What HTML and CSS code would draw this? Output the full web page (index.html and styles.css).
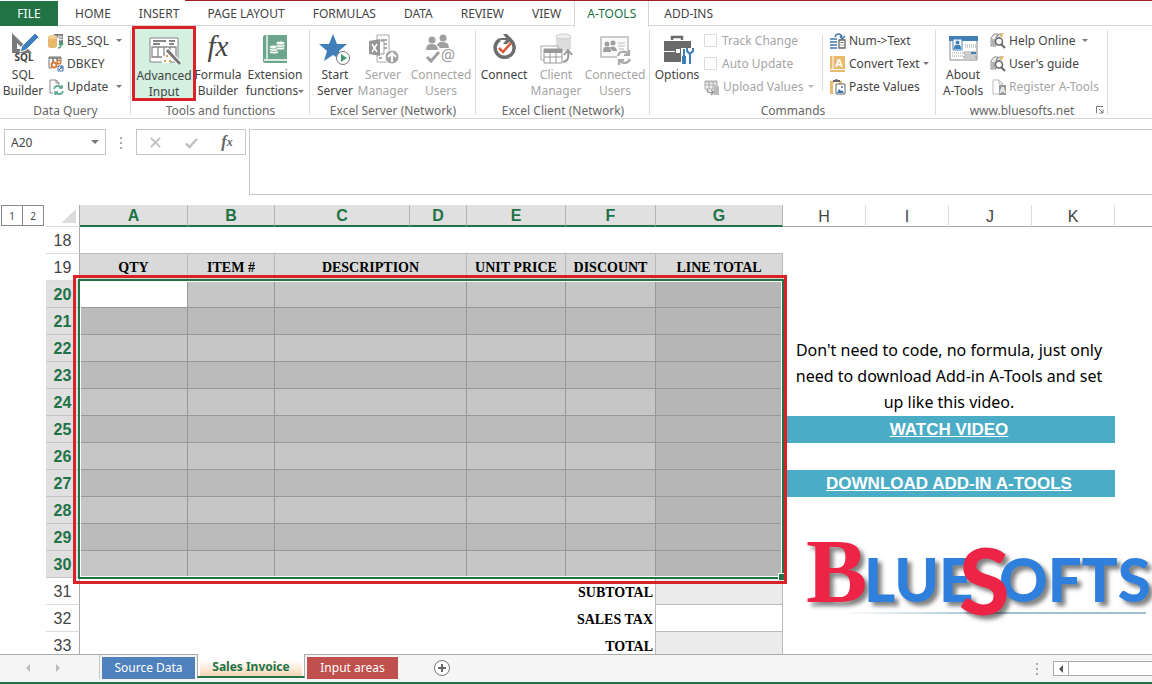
FILE: index.html
```
<!DOCTYPE html>
<html lang="en">
<head>
  <meta charset="UTF-8" />
  <meta name="viewport" content="width=device-width, initial-scale=1.0" />
  <title>Sales Invoice</title>
  <link rel="stylesheet" href="styles.css">
</head>
<body>
  <nav class="tabs">
    <button class="file">FILE</button>
    <button>HOME</button>
    <button>INSERT</button>
    <button>PAGE LAYOUT</button>
    <button>FORMULAS</button>
    <button>DATA</button>
    <button>REVIEW</button>
    <button>VIEW</button>
    <button class="active">A-TOOLS</button>
    <button>ADD-INS</button>
  </nav>

  <div class="ribbon">
    <!-- Data Query -->
    <section class="group g-query">
      <div class="tools">
        <button class="big w46">
          <svg viewBox="0 0 32 32"><path d="M5 1v20h20z" fill="#7a7a7a"/><path d="M10 11v6h6z" fill="#fff"/><path d="M13 20l2-6L28 1l4 4-13 13z" fill="#3f7fbf" stroke="#fff"/><rect x="5" y="21" width="24" height="10" fill="#fff"/><text x="17" y="29" class="icon-sql">SQL</text></svg>
          <span>SQL<br>Builder</span>
        </button>
        <div class="small-list">
          <button class="small"><svg viewBox="0 0 16 16"><path d="M6 1h9v10h-4V5H6z" fill="#777"/><path d="M8 4h7M8 6.500h7M11 2v6M13 2v6" stroke="#fff" stroke-width=".7"/><path d="M0 4v9c0 3 9 3 9 0V4z" fill="#e8b86d"/><ellipse cx="4.500" cy="4" rx="4.500" ry="2" fill="#f2cf91"/><path d="M10 15c3 0 3-2 3-5m-2 2l2-3 2 3" stroke="#4b9a78" stroke-width="1.500" fill="none"/></svg><span class="name">BS_SQL</span><i class="caret"></i></button>
          <button class="small"><svg viewBox="0 0 16 16"><path d="M4 12H1V1h12v4" fill="none" stroke="#777"/><path d="M1 2h12M5 2v4M9 2v3" stroke="#777" stroke-width="1.500"/><circle cx="6" cy="9" r="2.500" fill="none" stroke="#dd7a35" stroke-width="2"/><circle cx="11" cy="6" r="1.800" fill="none" stroke="#dd7a35" stroke-width="1.500"/><path d="M10 10h5v5h-5z" fill="#fff" stroke="#3e6ea5"/><path d="M11 14l3-3m-2 0h2v2" stroke="#3e6ea5" fill="none"/></svg><span class="name">DBKEY</span></button>
          <button class="small"><svg viewBox="0 0 16 16"><path d="M5 14H2V1h6l3 3v2M8 1v3h3" fill="none" stroke="#888"/><path d="M6 10c1-4 6-4 8-1m0-3v3h-3M15 12c-1 4-6 4-8 1m0 3v-3h3" fill="none" stroke="#5ea88b" stroke-width="1.600"/></svg><span class="name">Update</span><i class="caret"></i></button>
        </div>
      </div>
      <div class="group-name">Data Query</div>
    </section>

    <!-- Tools and functions -->
    <section class="group g-tools">
      <div class="tools">
        <button class="big w64 picked">
          <svg viewBox="0 0 32 32"><path d="M2 5h28v24H2z" fill="#fff" stroke="#858585"/><path d="M5 8h13M5 11h7M21 8h6M21 11h5" stroke="#858585" stroke-width="2"/><path d="M4 14h24v10H4zM10 14v10M16 14v10M22 14v10" fill="none" stroke="#858585" stroke-width="1.300"/><path d="M14 23h8v7h-8z" fill="#fff"/><path d="M18 16L32 31" stroke="#fff" stroke-width="5"/><path d="M19 17L32 31" stroke="#777" stroke-width="3"/><path d="M18 23l1 1 1-1-1-1zM21 28l1 1 1-1-1-1zM16 28l1 1 1-1-1-1z" fill="#fff" stroke="#dfa258"/></svg>
          <span>Advanced<br>Input</span>
        </button>
        <button class="big w44">
          <svg viewBox="0 0 32 32"><text x="16" y="24" class="icon-fx">fx</text></svg>
          <span>Formula<br>Builder</span>
        </button>
        <button class="big w70">
          <svg viewBox="0 0 32 32"><path d="M4 5q0-2 2-2h22v28H6q-2 0-2-2z" fill="#6ba58e"/><path d="M8 3v24M5 28h23" stroke="#fff" stroke-width="1.300"/><g fill="#fff" stroke="#6ba58e" stroke-width=".8"><ellipse cx="15" cy="20" rx="4.500" ry="2"/><ellipse cx="15" cy="17.500" rx="4.500" ry="2"/><ellipse cx="15" cy="15" rx="4.500" ry="2"/><ellipse cx="21.500" cy="16" rx="4.500" ry="2"/><ellipse cx="21.500" cy="13.500" rx="4.500" ry="2"/><ellipse cx="21.500" cy="11" rx="4.500" ry="2"/></g></svg>
          <span>Extension<br>functions<i class="caret"></i></span>
        </button>
      </div>
      <div class="group-name">Tools and functions</div>
    </section>

    <!-- Excel Server -->
    <section class="group g-server">
      <div class="tools">
        <button class="big w50">
          <svg viewBox="0 0 32 32"><path d="M14 2l4 10h10l-8 7 3 10-9-6-9 6 3-10-8-7h10z" fill="#407fb8"/><circle cx="24" cy="26" r="6.500" fill="#fff" stroke="#777"/><path d="M22 22v8l6-4z" fill="#3f9b74"/></svg>
          <span>Start<br>Server</span>
        </button>
        <button class="big w46" disabled>
          <svg viewBox="0 0 32 32"><path d="M10 3h12v27H10z" fill="#fff" stroke="#aaa"/><path d="M14 8h6M17 12h3M17 16h3M12 26h3" stroke="#aaa" stroke-width="2"/><path d="M2 9l11-2v17L2 22z" fill="#969696"/><path d="M5 12l5 8M10 12l-5 8" stroke="#fff" stroke-width="1.500"/><path d="M13 9h4v13h-4" fill="none" stroke="#999"/><circle cx="25" cy="25" r="7" fill="#a2a2a2" stroke="#fff"/><path d="M25 30v-9m-4 4l4-4 4 4" fill="none" stroke="#fff" stroke-width="2"/></svg>
          <span>Server<br>Manager</span>
        </button>
        <button class="big w70" disabled>
          <svg viewBox="0 0 32 32"><g fill="#a0a0a0"><circle cx="7" cy="8" r="3.500"/><circle cx="18" cy="6" r="3.500"/><path d="M1 18q0-7 6-6 6 0 6 6zM12 13q2-4 6-3 6 0 6 6h-9z"/></g><path d="M2 25l4 4 8-9" fill="none" stroke="#a0a0a0" stroke-width="3"/><text x="23" y="29" class="icon-at">@</text></svg>
          <span>Connected<br>Users</span>
        </button>
      </div>
      <div class="group-name">Excel Server (Network)</div>
    </section>

    <!-- Excel Client -->
    <section class="group g-client">
      <div class="tools">
        <button class="big w56">
          <svg viewBox="0 0 32 32"><path d="M12 7.500A9.500 9.500 0 1 0 22 8" fill="none" stroke="#6d6d6d" stroke-width="3.500"/><path d="M15 2h4l5 5-5 5h-4l3-4h-6V6h6z" fill="#6d6d6d"/><path d="M11 16l4 4 8-9" fill="none" stroke="#db5a34" stroke-width="2.500"/></svg>
          <span>Connect</span>
        </button>
        <button class="big w48" disabled>
          <svg viewBox="0 0 32 32"><path d="M16 4v12c0 4 15 4 15 0V4z" fill="#ddd"/><ellipse cx="23.500" cy="4.500" rx="7.500" ry="2.500" fill="#eee" stroke="#ccc"/><path d="M1 14h17v14H1z" fill="#fff" stroke="#aaa"/><path d="M4 17h18v14H4z" fill="#fff" stroke="#999"/><path d="M4 19h18" stroke="#999" stroke-width="4"/><path d="M4 25h18M10 20v11M16 20v11" stroke="#999"/><path d="M23 30c5-1 6-4 5-11m-4 4l4-5 4 5" fill="none" stroke="#999" stroke-width="2"/></svg>
          <span>Client<br>Manager</span>
        </button>
        <button class="big w70" disabled>
          <svg viewBox="0 0 32 32"><path d="M2 5h27v20H2z" fill="#fafafa" stroke="#bbb" stroke-width="1.500"/><g fill="#a0a0a0"><circle cx="8" cy="12" r="2.500"/><circle cx="14" cy="11" r="2.500"/><path d="M4 20q0-6 4-5 4-1 4 5zM11 15q6-2 7 4h-5z"/></g><path d="M19 11h7M19 14h7M20 17h5" stroke="#bbb"/><circle cx="25" cy="25" r="7" fill="#fff"/><path d="M19 24c1-5 8-6 11-1m0-5v5h-5M31 27c-2 5-8 5-11 1m0 5v-5h5" fill="none" stroke="#aaa" stroke-width="2.200"/></svg>
          <span>Connected<br>Users</span>
        </button>
      </div>
      <div class="group-name">Excel Client (Network)</div>
    </section>

    <!-- Commands -->
    <section class="group g-commands">
      <div class="tools">
        <button class="big w54">
          <svg viewBox="0 0 32 32"><path d="M11 8V5h10v3" fill="none" stroke="#6a6a6a" stroke-width="2.500"/><path d="M3 9h27v21H3z" fill="#6a6a6a"/><path d="M3 19h11v1H3zM20 19h10v1H20z" fill="#fff"/><path d="M15 17h4v4h-4z" fill="#fff"/><path d="M20 16h12v16H20z" fill="#fff"/><path d="M23 17v7" stroke="#3f7fb8" stroke-width="2"/><path d="M23 24v8" stroke="#3f7fb8" stroke-width="4"/><path d="M29 21v11M26 16v3l3 3 3-3v-3" fill="none" stroke="#3f7fb8" stroke-width="2"/></svg>
          <span>Options</span>
        </button>
        <div class="small-list checks">
          <label class="small off"><input type="checkbox" disabled><span>Track Change</span></label>
          <label class="small off"><input type="checkbox" disabled><span>Auto Update</span></label>
          <button class="small" disabled><svg viewBox="0 0 16 16"><path d="M1 2h12v8H1z" fill="#eee" stroke="#aaa"/><path d="M1 3h12M1 6h12M5 3v7M9 3v7" stroke="#aaa"/><path d="M3 10c0 4 3 4 6 3m-2-2l3 2-3 3" fill="none" stroke="#999" stroke-width="1.500"/><path d="M10 7h5v9h-5z" fill="#bbb"/></svg><span class="name">Upload Values</span><i class="caret"></i></button>
        </div>
        <div class="small-list texts">
          <button class="small"><svg viewBox="0 0 16 16"><path d="M0 6h7M0 9h7M0 12h7M0 15h7" stroke="#3f77ad" stroke-width="1.300"/><path d="M5 4c1-4 6-4 7 0m-2-1l2 3 3-3" fill="none" stroke="#3f77ad" stroke-width="1.500"/><path d="M9 7h6v8H9z" fill="#fff" stroke="#666" stroke-width="1.300"/><path d="M10.500 9.500h3M10.500 12h1m1 0h1" stroke="#666"/></svg><span>Num-&gt;Text</span></button>
          <button class="small"><svg viewBox="0 0 16 16"><path d="M0 0h15v16H0z" fill="#e9b96c"/><path d="M3 0v13M0 13.500h15" stroke="#fff"/><text x="9" y="11" class="icon-a">A</text></svg><span>Convert Text</span><i class="caret"></i></button>
          <button class="small"><svg viewBox="0 0 16 16"><path d="M1 2h3v2H3v11H0V2z" fill="#e9b96c"/><path d="M9 2h3v3H9z" fill="#e9b96c"/><path d="M3 3V1h2l1-1h1l1 1h2v2z" fill="#666"/><path d="M6 5h9v10H6z" fill="#fff" stroke="#666"/><path d="M7 14l2-4 2 2 1-1 2 3z" fill="#3f77ad"/><circle cx="12" cy="8" r="1" fill="#3f77ad"/></svg><span>Paste Values</span></button>
        </div>
      </div>
      <div class="group-name">Commands</div>
    </section>

    <!-- bluesofts.net -->
    <section class="group g-about">
      <div class="tools">
        <button class="big w54">
          <svg viewBox="0 0 32 32"><path d="M3 5h27v23H3z" fill="#fff" stroke="#888"/><path d="M2 4h29v5H2z" fill="#407fb8"/><path d="M6 7h9v11H6z" fill="#fff" stroke="#407fb8"/><circle cx="10.500" cy="10.500" r="2" fill="#407fb8"/><path d="M7 17q0-5 3.500-4Q14 12 14 17z" fill="#407fb8"/><path d="M18 13h11M18 15h11M5 21h11M5 24h11" stroke="#999" stroke-dasharray="1 1"/><path d="M17 20h12v2H17zM17 24h12v2H17z" fill="#fff" stroke="#999"/><path d="M24 21h5" stroke="#407fb8" stroke-width="2"/></svg>
          <span>About<br>A-Tools</span>
        </button>
        <div class="small-list">
          <button class="small"><svg viewBox="0 0 16 16"><path d="M1 5l3-4h4L6 5v8H1zM6 5l3-4h3L9 5" fill="#eee" stroke="#888"/><path d="M9 4l3-4h2l-2 4z" fill="#e9b96c"/><path d="M2 7h3M2 9h3M2 11h3" stroke="#777"/><circle cx="9" cy="8.500" r="3.500" fill="#fff" stroke="#666" stroke-width="1.500"/><path d="M11 11l4 4" stroke="#666" stroke-width="2"/></svg><span class="name">Help Online</span><i class="caret"></i></button>
          <button class="small"><svg viewBox="0 0 16 16"><path d="M1 5l3-4h4L6 5v8H1zM6 5l3-4h3L9 5" fill="#eee" stroke="#888"/><path d="M9 4l3-4h2l-2 4z" fill="#e9b96c"/><path d="M2 7h3M2 9h3M2 11h3" stroke="#777"/><circle cx="9" cy="8.500" r="3.500" fill="#fff" stroke="#666" stroke-width="1.500"/><path d="M11 11l4 4" stroke="#666" stroke-width="2"/></svg><span>User's guide</span></button>
          <button class="small" disabled><svg viewBox="0 0 16 16"><path d="M3 1h6l4 4v10H3zM9 1v4h4" fill="#fff" stroke="#bbb"/><path d="M9 6h7v10H9z" fill="#999"/><text x="12.500" y="14" class="icon-reg">A</text></svg><span>Register A-Tools</span></button>
        </div>
      </div>
      <div class="group-name">www.bluesofts.net</div>
      <button class="launcher" aria-label="More"><svg viewBox="0 0 8 8"><path d="M.500 7V.500H7M3 3l4 4M7 3.500V7H3.500" fill="none" stroke="#777"/></svg></button>
    </section>
  </div>

  <div class="formula-bar">
    <div class="name-box"><input type="text" value="A20" aria-label="Name box"><i class="caret"></i></div>
    <div class="dots"><i></i><i></i><i></i></div>
    <div class="fx-buttons">
      <button aria-label="Cancel"><svg viewBox="0 0 14 14"><path d="M2 2l10 10M12 2L2 12" stroke="#c0c0c0" stroke-width="2"/></svg></button>
      <button aria-label="Enter"><svg viewBox="0 0 14 14"><path d="M1 8l4 4 8-9" fill="none" stroke="#c0c0c0" stroke-width="2.500"/></svg></button>
      <button class="fx">f<small>x</small></button>
    </div>
    <textarea aria-label="Formula"></textarea>
  </div>

  <main class="sheet">
    <div class="outline">
      <button>1</button><button>2</button>
    </div>
    <div class="grid">
      <table>
        <colgroup>
          <col class="c-head"><col class="c-a"><col class="c-b"><col class="c-c"><col class="c-d"><col class="c-e"><col class="c-f"><col class="c-g"><col class="c-h"><col class="c-h"><col class="c-h"><col class="c-h"><col>
        </colgroup>
        <thead>
          <tr>
            <th class="corner"></th>
            <th class="sel">A</th><th class="sel">B</th><th class="sel">C</th><th class="sel">D</th><th class="sel">E</th><th class="sel">F</th><th class="sel">G</th>
            <th>H</th><th>I</th><th>J</th><th>K</th><th></th>
          </tr>
        </thead>
        <tbody>
          <tr><th>18</th><td colspan="7" class="under"></td><td colspan="5"></td></tr>
          <tr class="titles"><th>19</th><td>QTY</td><td>ITEM #</td><td colspan="2">DESCRIPTION</td><td>UNIT PRICE</td><td>DISCOUNT</td><td>LINE TOTAL</td><td colspan="5" class="plain"></td></tr>
          <tr class="item"><th>20</th><td class="current"></td><td></td><td colspan="2"></td><td></td><td></td><td class="total"></td><td colspan="4" rowspan="5" class="note">Don't need to code, no formula, just only<br>need to download Add-in A-Tools and set<br>up like this video.</td></tr>
          <tr class="item odd"><th>21</th><td></td><td></td><td colspan="2"></td><td></td><td></td><td class="total"></td></tr>
          <tr class="item"><th>22</th><td></td><td></td><td colspan="2"></td><td></td><td></td><td class="total"></td></tr>
          <tr class="item odd"><th>23</th><td></td><td></td><td colspan="2"></td><td></td><td></td><td class="total"></td></tr>
          <tr class="item"><th>24</th><td></td><td></td><td colspan="2"></td><td></td><td></td><td class="total"></td></tr>
          <tr class="item odd"><th>25</th><td></td><td></td><td colspan="2"></td><td></td><td></td><td class="total"></td><td colspan="4" class="link"><a href="#">WATCH VIDEO</a></td></tr>
          <tr class="item"><th>26</th><td></td><td></td><td colspan="2"></td><td></td><td></td><td class="total"></td></tr>
          <tr class="item odd"><th>27</th><td></td><td></td><td colspan="2"></td><td></td><td></td><td class="total"></td><td colspan="4" class="link"><a href="#">DOWNLOAD ADD-IN A-TOOLS</a></td></tr>
          <tr class="item"><th>28</th><td></td><td></td><td colspan="2"></td><td></td><td></td><td class="total"></td></tr>
          <tr class="item odd"><th>29</th><td></td><td></td><td colspan="2"></td><td></td><td></td><td class="total"></td></tr>
          <tr class="item"><th>30</th><td></td><td></td><td colspan="2"></td><td></td><td></td><td class="total"></td></tr>
          <tr class="sum"><th>31</th><td colspan="6">SUBTOTAL</td><td class="amount grey"></td></tr>
          <tr class="sum"><th>32</th><td colspan="6">SALES TAX</td><td class="amount"></td></tr>
          <tr class="sum"><th>33</th><td colspan="6">TOTAL</td><td class="amount grey"></td></tr>
        </tbody>
      </table>

      <div class="selection"></div>
      <div class="marker"></div>

      <!-- picture floating over the cells -->
      <svg class="logo" viewBox="0 0 345 130" role="img" aria-label="BlueSofts">
        <defs>
          <linearGradient id="rule"><stop offset="0" stop-color="#fff"/><stop offset=".5" stop-color="#9fbfd0"/><stop offset="1" stop-color="#9fbfd0"/></linearGradient>
        </defs>
        <rect x="40" y="104" width="304" height="2" fill="url(#rule)"/>
        <g class="shade">
          <text x="4" y="94" class="logo-b">B</text>
          <text x="62" y="94" class="logo-blue">LUE</text>
          <text x="197" y="94" class="logo-blue">OFTS</text>
          <text x="157" y="107" class="logo-s">S</text>
        </g>
      </svg>
    </div>
  </main>

  <footer class="sheet-tabs">
    <div class="arrows"><i class="left"></i><i class="right"></i></div>
    <button class="blue">Source Data</button>
    <button class="current-tab"><span>Sales Invoice</span></button>
    <button class="red">Input areas</button>
    <button class="add" aria-label="New sheet"><svg viewBox="0 0 16 16"><circle cx="8" cy="8" r="7.500" fill="#fff" stroke="#777"/><path d="M8 4v8M4 8h8" stroke="#666" stroke-width="2"/></svg></button>
    <div class="dots"><i></i><i></i><i></i></div>
    <div class="scrollbar"><button aria-label="Scroll left"><i class="left"></i></button></div>
  </footer>
</body>
</html>
```
FILE: styles.css
```
* {
  box-sizing: border-box;
  margin: 0;
  padding: 0;
}

html, body {
  height: 100%;
}

body {
  display: flex;
  flex-direction: column;
  background: #fff;
  font-family: "Noto Sans", "Open Sans", sans-serif;
  font-size: 12px;
  color: #444;
  overflow: hidden;
}

button, input, textarea {
  font: inherit;
  color: inherit;
  background: none;
  border: none;
}

button:disabled, .off {
  color: #a5a5a5;
}

svg {
  overflow: visible;
}

/* ribbon tabs */
.tabs {
  display: flex;
  flex: none;
  height: 26px;
  border-bottom: 1px solid #d5d5d5;
  background: linear-gradient(#a01c20, #a01c20) 185px 0 / 100% 1px no-repeat;
}

.tabs button {
  padding: 2px 14px 0;
  line-height: 22px;
}

.tabs .file {
  width: 58px;
  height: 25px;
  margin: 1px 3px 0 0;
  padding: 0;
  background: #217346;
  color: #fff;
}

.tabs .active {
  height: 26px;
  margin: 1px 1px 0 -1px;
  padding: 0 12px;
  border: 1px solid #d5d5d5;
  border-width: 0 1px;
  background: #fff;
  color: #217346;
}

/* ribbon groups */
.ribbon {
  display: flex;
  height: 93px;
  flex: none;
  border-bottom: 1px solid #d5d5d5;
}

.group {
  position: relative;
  flex: none;
  height: 89px;
}

.group::after {
  content: "";
  position: absolute;
  top: 4px;
  right: 0;
  bottom: 0;
  width: 1px;
  background: #dcdcdc;
}

.g-query { width: 131px; }
.g-tools { width: 179px; }
.g-server { width: 166px; }
.g-client { width: 174px; }
.g-commands { width: 286px; }
.g-about { width: 172px; }

.tools {
  display: flex;
  height: 76px;
}

.group-name {
  line-height: 17px;
  text-align: center;
  color: #666;
}

.big {
  display: flex;
  flex-direction: column;
  align-items: center;
  flex: none;
  padding-top: 6px;
  line-height: 16px;
}

.big svg {
  width: 32px;
  height: 32px;
  margin-bottom: 3px;
}

.big span {
  white-space: nowrap;
}

.w44 { width: 44px; }
.w46 { width: 46px; }
.w48 { width: 48px; }
.w50 { width: 50px; }
.w54 { width: 54px; }
.w56 { width: 56px; }
.w64 { width: 64px; }
.w70 { width: 70px; }

.picked {
  height: 75px;
  margin-left: 1px;
  padding-top: 4px;
  border: 3px solid #da2128;
  background: #d3f0e0;
}

.small-list {
  padding: 3px 0 0 2px;
}

.small {
  display: flex;
  align-items: center;
  height: 23px;
  gap: 3px;
  white-space: nowrap;
}

.small svg {
  width: 16px;
  height: 16px;
}

.g-query .name {
  width: 46px;
  text-align: left;
}

.small input {
  appearance: none;
  width: 13px;
  height: 13px;
  margin-right: 2px;
  border: 1px solid #dcdcdc;
}

.checks {
  width: 118px;
  padding-left: 0;
}

.checks .name {
  width: 82px;
  text-align: left;
}

.texts {
  padding-left: 8px;
  position: relative;
}

.texts::before {
  content: "";
  position: absolute;
  left: 0;
  top: 9px;
  height: 56px;
  width: 1px;
  background: #dcdcdc;
}

.g-about .small-list {
  padding-left: 0;
}

.g-about .name {
  width: 70px;
  text-align: left;
}

.caret {
  display: inline-block;
  border: 3px solid transparent;
  border-top-color: #777;
  border-bottom: none;
  vertical-align: middle;
}

button:disabled .caret {
  border-top-color: #bbb;
}

.launcher {
  position: absolute;
  right: 4px;
  bottom: 1px;
  width: 8px;
  height: 8px;
  line-height: 0;
}

.icon-sql {
  font: bold 10px "Noto Sans", sans-serif;
  text-anchor: middle;
  fill: #444;
}

.icon-fx {
  font: italic 29px "Liberation Serif", serif;
  text-anchor: middle;
  fill: #444;
}

.icon-at {
  font: 16px "Noto Sans", sans-serif;
  text-anchor: middle;
  fill: #a0a0a0;
}

.icon-a, .icon-reg {
  font: bold 11px "Noto Sans", sans-serif;
  text-anchor: middle;
  fill: #fff;
}

.icon-reg {
  font-size: 8px;
}

/* formula bar */
.formula-bar {
  display: flex;
  flex: none;
  height: 86px;
  padding: 10px 0 0 4px;
}

.name-box {
  display: flex;
  align-items: center;
  width: 102px;
  height: 26px;
  padding: 0 6px;
  border: 1px solid #c6c6c6;
}

.name-box input {
  width: 80px;
  outline: none;
}

.name-box .caret {
  border-width: 4px 4px 0;
}

.dots {
  display: flex;
  flex-direction: column;
  gap: 3px;
}

.dots i {
  width: 2px;
  height: 2px;
  background: #aaa;
}

.formula-bar .dots {
  margin: 8px 14px 0;
}

.fx-buttons {
  display: flex;
  width: 110px;
  height: 26px;
  border: 1px solid #c6c6c6;
}

.fx-buttons button {
  flex: 1;
  display: flex;
  align-items: center;
  justify-content: center;
}

.fx-buttons svg {
  width: 13px;
  height: 13px;
}

.fx-buttons .fx {
  font: italic bold 16px "Liberation Serif", serif;
  color: #666;
}

.fx small {
  font-size: 12px;
}

.formula-bar textarea {
  flex: 1;
  height: 66px;
  margin-left: 3px;
  border: 1px solid #c6c6c6;
  border-right: none;
  resize: none;
}

/* sheet */
.sheet {
  display: flex;
  flex: 1;
  min-height: 0;
  overflow: hidden;
}

.outline {
  flex: none;
  width: 46px;
  padding-left: 1px;
  display: flex;
  align-items: flex-start;
}

.outline button {
  width: 22px;
  height: 21px;
  border: 1px solid #8a8a8a;
  font-size: 10px;
}

.outline button + button {
  margin-left: -1px;
}

.grid {
  position: relative;
  flex: 1;
}

table {
  width: 100%;
  table-layout: fixed;
  border-collapse: separate;
  border-spacing: 0;
}

.c-head { width: 34px; }
.c-a { width: 108px; }
.c-b { width: 87px; }
.c-c { width: 135px; }
.c-d { width: 57px; }
.c-e { width: 99px; }
.c-f { width: 90px; }
.c-g { width: 127px; }
.c-h { width: 83px; }

tr {
  height: 27px;
}

thead tr {
  height: 22px;
}

th {
  padding-top: 2px;
  font: 16px/18px "Liberation Sans", Arial, sans-serif;
  color: #444;
}

thead th {
  border-right: 1px solid #dcdcdc;
  border-bottom: 1px solid #ababab;
}

thead th:last-child {
  border-right: none;
}

thead .sel {
  background: #e0e0e0;
  border-right-color: #b5b5b5;
  border-bottom: 2px solid #217346;
  color: #217346;
  font-weight: bold;
}

thead .corner {
  border-right-color: #ababab;
  border-bottom-color: #dcdcdc;
  background: linear-gradient(135deg, transparent 50%, #dcdcdc 50%) 16px 4px / 14px 14px no-repeat;
}

tbody th {
  border-right: 1px solid #ababab;
  border-bottom: 1px solid #dcdcdc;
}

.item th {
  background: #e0e0e0;
  border-bottom-color: #c6c6c6;
  color: #217346;
  font-weight: bold;
}

.under {
  border-bottom: 1px solid #bbb;
}

.titles td, .sum td {
  padding-top: 2px;
  font: bold 14px/18px "Liberation Serif", "Times New Roman", serif;
  color: #000;
}

.titles td {
  background: #d9d9d9;
  border-right: 1px solid #bbb;
  border-bottom: 1px solid #bbb;
  text-align: center;
  white-space: nowrap;
}

.titles .plain {
  background: none;
  border: none;
}

.item td {
  background: #c6c6c6;
  border-right: 1px solid #989898;
  border-bottom: 1px solid #989898;
}

.odd td {
  background: #bbb;
}

.item .total {
  background: #b6b6b6;
}

.item .current {
  background: #fff;
}

.item .note {
  padding-bottom: 1px;
  background: none;
  border: none;
  vertical-align: bottom;
  text-align: center;
  font-size: 16px;
  line-height: 26px;
  color: #000;
  white-space: nowrap;
}

.item .link {
  background: #4bacc6;
  border: none;
  text-align: center;
  font: bold 17px/20px "Liberation Sans", Arial, sans-serif;
}

.link a {
  color: #fff;
}

.sum td {
  text-align: right;
  padding-right: 2px;
  border-right: 1px solid #bbb;
}

.sum .amount {
  border-bottom: 1px solid #bbb;
}

.sum .grey {
  background: #ebebeb;
}

.selection {
  position: absolute;
  left: 32px;
  top: 74px;
  width: 706px;
  height: 300px;
  border: 2px solid #217346;
  box-shadow: inset 0 0 0 1px #fff;
}

.selection::after {
  content: "";
  position: absolute;
  right: -3px;
  bottom: -3px;
  width: 6px;
  height: 6px;
  background: #217346;
  border: 1px solid #fff;
  border-width: 1px 0 0 1px;
}

.marker {
  position: absolute;
  left: 27px;
  top: 70px;
  width: 714px;
  height: 309px;
  border: 3px solid #da2128;
}

.logo {
  position: absolute;
  left: 756px;
  top: 303px;
  width: 345px;
  height: 130px;
}

.shade {
  filter: drop-shadow(4px 4px 2px rgba(0, 0, 0, 0.5));
}

.logo-b {
  font: bold 92px "Liberation Serif", serif;
  fill: #ee2446;
}

.logo-blue {
  font: 900 60px Lato, sans-serif;
  fill: #2f7fdc;
}

.logo-s {
  font: 900 92px Lato, sans-serif;
  fill: #ee2446;
}

/* sheet tabs */
.sheet-tabs {
  display: flex;
  flex: none;
  height: 30px;
  border-top: 1px solid #ababab;
  border-bottom: 2px solid #217346;
  background: #f5f5f5;
}

.sheet-tabs .arrows {
  display: flex;
  gap: 26px;
  width: 100px;
  height: 24px;
  margin-right: 2px;
  padding: 9px 0 0 26px;
  border-right: 1px solid #c6c6c6;
}

.left, .right {
  height: 0;
  border: 4px solid transparent;
}

.left {
  border-right-color: #bbb;
  border-left: none;
}

.right {
  border-left-color: #bbb;
  border-right: none;
}

.sheet-tabs .blue, .sheet-tabs .red {
  width: 93px;
  height: 22px;
  margin: 2px 2px 0 0;
  padding-bottom: 2px;
  background: #4f81bd;
  color: #fff;
}

.sheet-tabs .red {
  margin-left: 2px;
  width: 91px;
  background: #c0504d;
}

.current-tab {
  height: 24px;
  width: 108px;
  margin-top: -1px;
  padding: 0 2px;
  border: 1px solid #ababab;
  border-width: 0 1px 2px;
  border-bottom-color: #217346;
  background: #fff;
  color: #217346;
  font-weight: bold;
}

.current-tab span {
  display: block;
  height: 22px;
  line-height: 26px;
  background: linear-gradient(#fff 30%, #fbd5b5);
}

.add {
  width: 16px;
  height: 16px;
  margin: 5px auto 0 34px;
  line-height: 0;
}

.sheet-tabs .dots {
  margin: 8px 15px 0 0;
}

.scrollbar {
  width: 99px;
  height: 15px;
  margin-top: 6px;
  border: 1px solid #ababab;
  border-right: none;
  background: #fff;
}

.scrollbar button {
  display: flex;
  align-items: center;
  justify-content: center;
  width: 15px;
  height: 13px;
  border-right: 1px solid #ababab;
}

.scrollbar .left {
  border-right-color: #555;
}
```
